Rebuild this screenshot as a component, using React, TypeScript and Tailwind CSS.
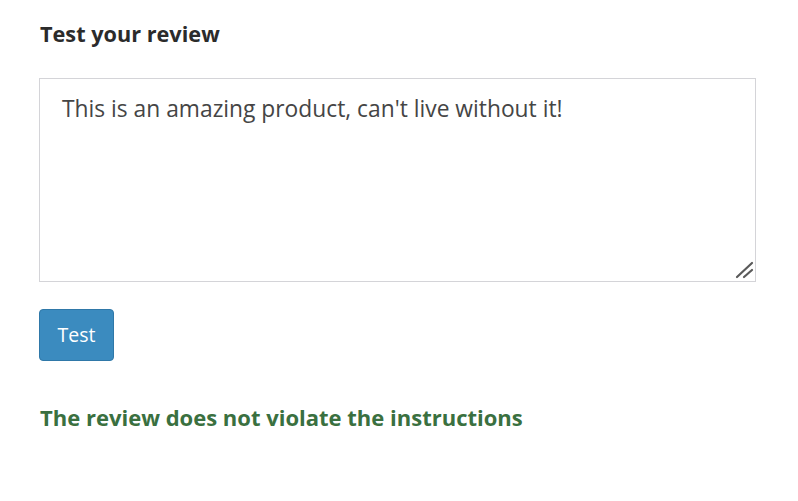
import React, { useState } from 'react';

const App = () => {
  const [review, setReview] = useState("This is an amazing product, can't live without it!");

  return (
    <div className="bg-white w-[798px] h-[501px] px-[39px] pt-[19px]" style={{ fontFamily: '"Open Sans", "Noto Sans", sans-serif' }}>
      <h2 className="text-[21.7px] font-bold text-[#2b2b2b] leading-[30px] pl-px">
        Test your review
      </h2>
      <div className="relative mt-[29px] w-[717px] h-[204px]">
        <textarea
          value={review}
          onChange={(e) => setReview(e.target.value)}
          className="block w-full h-full resize-none border border-[#d4d4d8] px-[22px] py-[14px] text-[22.8px] leading-[32px] text-[#454545] outline-none"
        />
        <svg className="absolute right-[1px] bottom-[3px] pointer-events-none" width="20" height="20" viewBox="0 0 20 20">
          <line x1="2" y1="18" x2="17" y2="4" stroke="#5a5a5a" strokeWidth="2.2" strokeLinecap="round" />
          <line x1="9" y1="18" x2="17" y2="11" stroke="#5a5a5a" strokeWidth="2.2" strokeLinecap="round" />
        </svg>
      </div>
      <button className="mt-[27px] w-[75px] h-[52px] rounded-[4px] bg-[#3b8bbf] border border-[#2f78a8] text-white text-[19.5px]">
        Test
      </button>
      <p className="mt-[41px] pl-px text-[22px] font-bold text-[#3a7040] leading-[30px]">
        The review does not violate the instructions
      </p>
    </div>
  );
};

export default App;
